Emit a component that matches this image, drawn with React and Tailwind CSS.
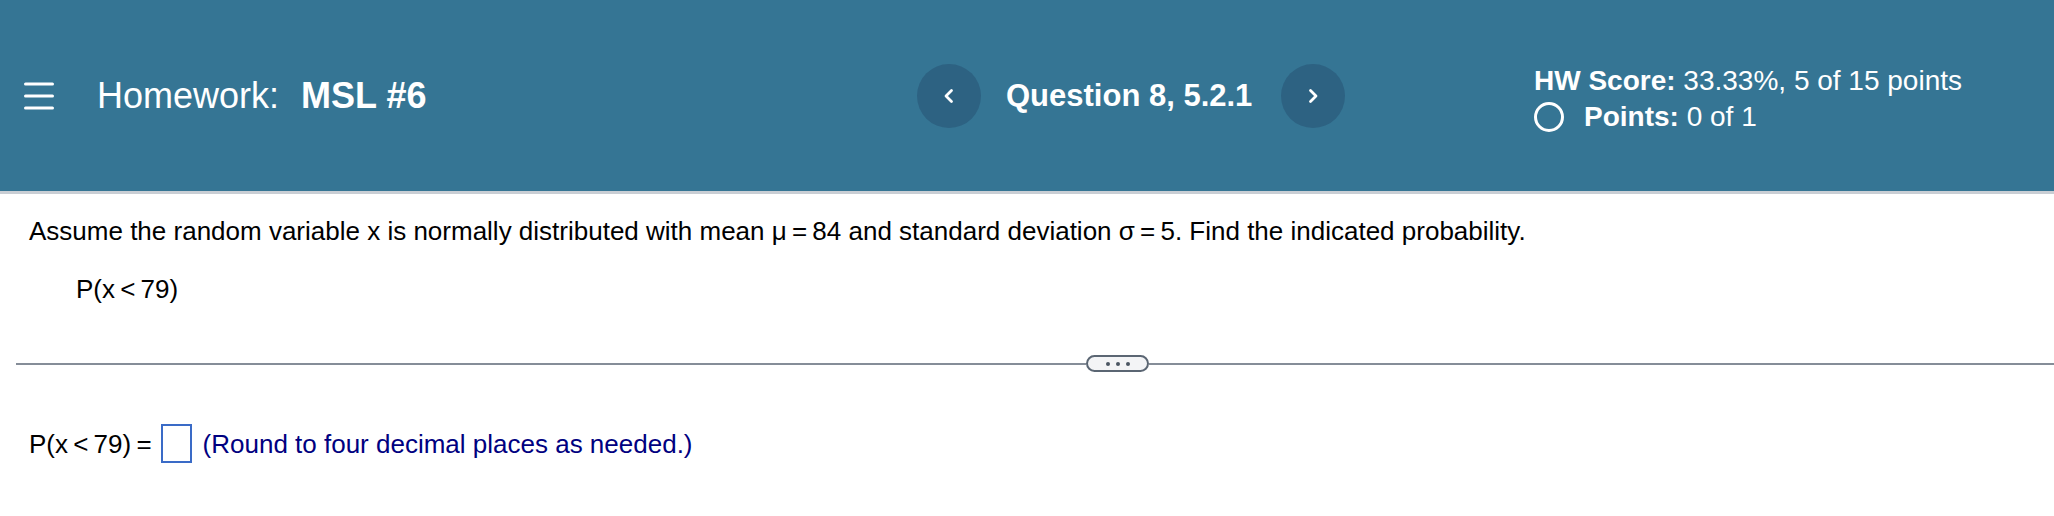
import React from 'react';

const Chevron = ({ dir }) => (
  <svg width="12" height="16" viewBox="0 0 12 16" fill="none">
    <path
      d={dir === 'left' ? 'M8.5 2.5 L3 8 L8.5 13.5' : 'M3.5 2.5 L9 8 L3.5 13.5'}
      stroke="white"
      strokeWidth="2.8"
      strokeLinecap="round"
      strokeLinejoin="round"
    />
  </svg>
);

const NavButton = ({ dir }) => (
  <button className="w-[64px] h-[64px] rounded-full bg-[#2d6282] flex items-center justify-center shrink-0">
    <Chevron dir={dir} />
  </button>
);

const Header = () => (
  <div className="h-[194px] bg-[#357594] border-b-[3px] border-[#c9ced4] flex items-center text-white px-[24px]">
    {/* Left: menu + title */}
    <div className="w-[893px] flex items-center shrink-0">
      <svg width="30" height="28" viewBox="0 0 30 28" fill="none" className="shrink-0">
        <path d="M1.5 2h27M1.5 14h27M1.5 26h27" stroke="white" strokeWidth="3" strokeLinecap="round" />
      </svg>
      <div className="ml-[43px] text-[36px] leading-[42px] whitespace-nowrap">
        Homework: <span className="font-bold ml-[12px]">MSL #6</span>
      </div>
    </div>

    {/* Center: question navigation */}
    <div className="w-[617px] flex items-center shrink-0">
      <NavButton dir="left" />
      <div className="ml-[25px] mr-[29px] text-[31px] leading-[38px] font-bold whitespace-nowrap">
        Question 8, 5.2.1
      </div>
      <NavButton dir="right" />
    </div>

    {/* Right: score */}
    <div className="flex flex-col text-[28px] leading-[36px] mt-[6px] whitespace-nowrap">
      <div>
        <span className="font-bold">HW Score:</span> 33.33%, 5 of 15 points
      </div>
      <div className="flex items-center">
        <span className="w-[30px] h-[30px] rounded-full border-[3px] border-white shrink-0" />
        <span className="ml-[20px]">
          <span className="font-bold">Points:</span> 0 of 1
        </span>
      </div>
    </div>
  </div>
);

const App = () => {
  return (
    <div className="min-h-screen bg-white" style={{ fontFamily: '"Liberation Sans", Arial, sans-serif' }}>
      <Header />

      {/* Question */}
      <div className="pt-[22px] px-[29px] text-[26px] leading-[30px] text-black">
        <p className="whitespace-nowrap">
          Assume the random variable x is normally distributed with mean μ&thinsp;=&thinsp;84 and standard deviation σ&thinsp;=&thinsp;5. Find the indicated probability.
        </p>
        <p className="mt-[28px] ml-[47px]">P(x&thinsp;&lt;&thinsp;79)</p>
      </div>

      {/* Divider with expand pill */}
      <div className="mt-[51px] pl-[16px] flex items-center">
        <div className="w-[1070px] h-[2px] bg-[#858d98]" />
        <div className="w-[63px] h-[17px] rounded-full border-2 border-[#5b6673] bg-[#f3f4f6] flex items-center justify-center gap-[6px] shrink-0">
          <span className="w-[4px] h-[4px] rounded-full bg-[#4b5563]" />
          <span className="w-[4px] h-[4px] rounded-full bg-[#4b5563]" />
          <span className="w-[4px] h-[4px] rounded-full bg-[#4b5563]" />
        </div>
        <div className="flex-1 h-[2px] bg-[#858d98]" />
      </div>

      {/* Answer row */}
      <div className="mt-[52px] px-[29px] flex items-center text-[26px] leading-[30px]">
        <span className="text-black whitespace-nowrap">P(x&thinsp;&lt;&thinsp;79)&thinsp;=</span>
        <span className="ml-[9px] w-[31px] h-[39px] border-2 border-[#3a6bc7] bg-white shrink-0" />
        <span className="ml-[11px] text-[#000080] whitespace-nowrap">(Round to four decimal places as needed.)</span>
      </div>
    </div>
  );
};

export default App;
